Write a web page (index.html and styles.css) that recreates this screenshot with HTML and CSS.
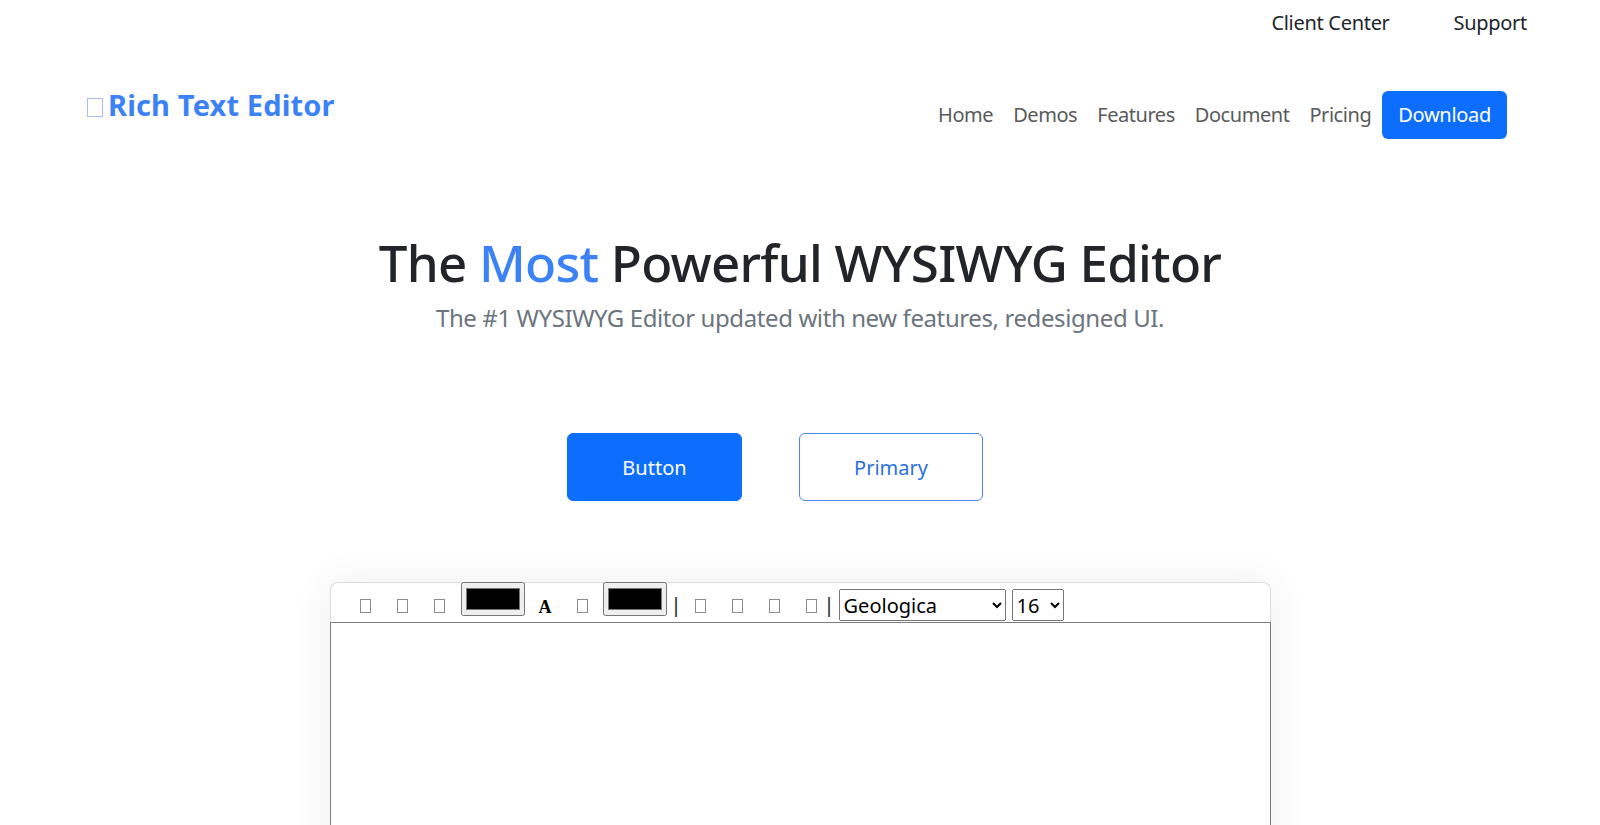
FILE: index.html
```html
<!DOCTYPE html>
<html lang="en">
<head>
<meta charset="utf-8">
<title>Rich Text Editor</title>
<link rel="stylesheet" href="styles.css">
</head>
<body>
<div class="topbar">
  <a class="top-link" href="#">Client Center</a>
  <a class="top-link" href="#">Support</a>
</div>
<header class="header">
  <a class="logo" href="#"><span class="logo-icon"></span>Rich Text Editor</a>
  <nav class="nav">
    <a class="nav-link" href="#">Home</a>
    <a class="nav-link" href="#">Demos</a>
    <a class="nav-link" href="#">Features</a>
    <a class="nav-link" href="#">Document</a>
    <a class="nav-link" href="#">Pricing</a>
    <a class="nav-btn" href="#">Download</a>
  </nav>
</header>
<section class="hero">
  <h1 class="hero-title">The <span class="accent">Most</span> Powerful WYSIWYG Editor</h1>
  <p class="hero-sub">The #1 WYSIWYG Editor updated with new features, redesigned UI.</p>
  <div class="hero-actions">
    <a class="btn btn-solid" href="#">Button</a>
    <a class="btn btn-outline" href="#">Primary</a>
  </div>
</section>
<section class="editor">
  <div class="toolbar">
    <button class="tb-btn first"><span class="tofu"></span></button>
    <button class="tb-btn"><span class="tofu"></span></button>
    <button class="tb-btn"><span class="tofu"></span></button>
    <input class="tb-color first-color" type="color" value="#000000">
    <button class="tb-letter">A</button>
    <button class="tb-btn"><span class="tofu"></span></button>
    <input class="tb-color second-color" type="color" value="#000000">
    <span class="tb-sep">|</span>
    <button class="tb-btn tight"><span class="tofu"></span></button>
    <button class="tb-btn tight"><span class="tofu"></span></button>
    <button class="tb-btn tight"><span class="tofu"></span></button>
    <button class="tb-btn tight"><span class="tofu"></span></button>
    <span class="tb-sep sep2">|</span>
    <select class="tb-select font-select"><option>Geologica</option></select>
    <select class="tb-select size-select"><option>16</option></select>
  </div>
  <div class="editor-body"></div>
</section>
</body>
</html>
```
FILE: styles.css
```css
* { box-sizing: border-box; }
html, body { margin: 0; padding: 0; background: #fff; }
body {
  font-family: "Noto Sans", "Open Sans", sans-serif;
  color: #212529;
  overflow: hidden;
}
a { text-decoration: none; }

.topbar {
  display: flex;
  justify-content: flex-end;
  gap: 64px;
  height: 46px;
  padding-right: 73px;
  font-size: 20px;
  line-height: 46px;
  letter-spacing: -0.3px;
}
.top-link { color: #212529; }

.header {
  display: flex;
  justify-content: space-between;
  align-items: flex-start;
  padding: 45px 93px 0 87px;
}
.logo {
  margin-top: -6px;
  font-size: 29px;
  font-weight: 700;
  line-height: 40px;
  letter-spacing: 0.15px;
  color: #3b82f6;
}
.logo-icon {
  display: inline-block;
  width: 16px;
  height: 19px;
  margin-right: 5px;
  border: 1.5px solid #aabcf5;
  vertical-align: -1px;
}
.nav {
  display: flex;
  align-items: center;
}
.nav-link {
  padding: 10px 10px;
  font-size: 20px;
  line-height: 28px;
  letter-spacing: -0.45px;
  color: #5a5a5a;
}
.nav-btn {
  margin-left: 1px;
  padding: 10px 16px;
  font-size: 20px;
  line-height: 28px;
  letter-spacing: -0.3px;
  color: #fff;
  background: #0d6efd;
  border-radius: 6px;
}

.hero {
  text-align: center;
  padding-top: 91px;
}
.hero-title {
  margin: 0;
  font-size: 51px;
  font-weight: 500;
  line-height: 65px;
  letter-spacing: -0.75px;
  color: #212529;
}
.accent { color: #3b82f6; }
.hero-sub {
  margin: 5px 0 0;
  font-size: 24px;
  line-height: 36px;
  letter-spacing: -0.4px;
  color: #6c757d;
}
.hero-actions {
  display: flex;
  justify-content: center;
  gap: 57px;
  padding-right: 50px;
  margin-top: 97px;
}
.btn {
  display: block;
  padding: 20px 0 18px;
  font-size: 20px;
  line-height: 28px;
  text-align: center;
  border: 1px solid #0d6efd;
  border-radius: 6px;
}
.btn-solid {
  width: 175px;
  color: #fff;
  background: #0d6efd;
}
.btn-outline {
  width: 184px;
  color: #2a6fe0;
  background: #fff;
  border-color: #4a86ee;
}

.editor {
  width: 941px;
  margin: 81px auto 0;
  box-shadow: 0 0 40px rgba(0, 0, 0, 0.07);
  border-radius: 8px 8px 0 0;
}
.toolbar {
  display: flex;
  align-items: flex-start;
  height: 40px;
  padding-left: 16px;
  background: #fff;
  border: 1px solid #dcdcdc;
  border-bottom: none;
  border-radius: 8px 8px 0 0;
}
.tb-btn {
  display: block;
  margin: 0;
  padding: 16px 13px 0;
  background: none;
  border: none;
  line-height: 0;
}
.tofu {
  display: block;
  width: 11px;
  height: 14px;
  border: 1px solid #8c8c8c;
}
.tb-color {
  display: block;
  width: 64px;
  height: 34px;
  margin: -1px 0 0;
}
.first-color { margin-left: 3px; }
.second-color { margin-left: 2px; }
.tb-letter {
  display: block;
  margin: 15px 12px 0 14px;
  padding: 0;
  background: none;
  border: none;
  font-family: "Liberation Serif", serif;
  font-weight: 700;
  font-size: 18px;
  line-height: 18px;
  color: #000;
}
.tb-sep {
  display: block;
  margin: 8px 0 0 4px;
  font-size: 20px;
  line-height: 28px;
  color: #222;
}
.sep2 { margin-left: -6px; margin-right: 4px; }
.tb-select {
  display: block;
  height: 32px;
  margin-top: 6px;
  font-family: "Noto Sans", sans-serif;
  font-size: 20px;
  color: #000;
}
.font-select { width: 167px; }
.size-select { width: 52px; margin-left: 6px; }
.editor-body {
  height: 420px;
  background: #fff;
  border: 1px solid #7d7d7d;
}
```
